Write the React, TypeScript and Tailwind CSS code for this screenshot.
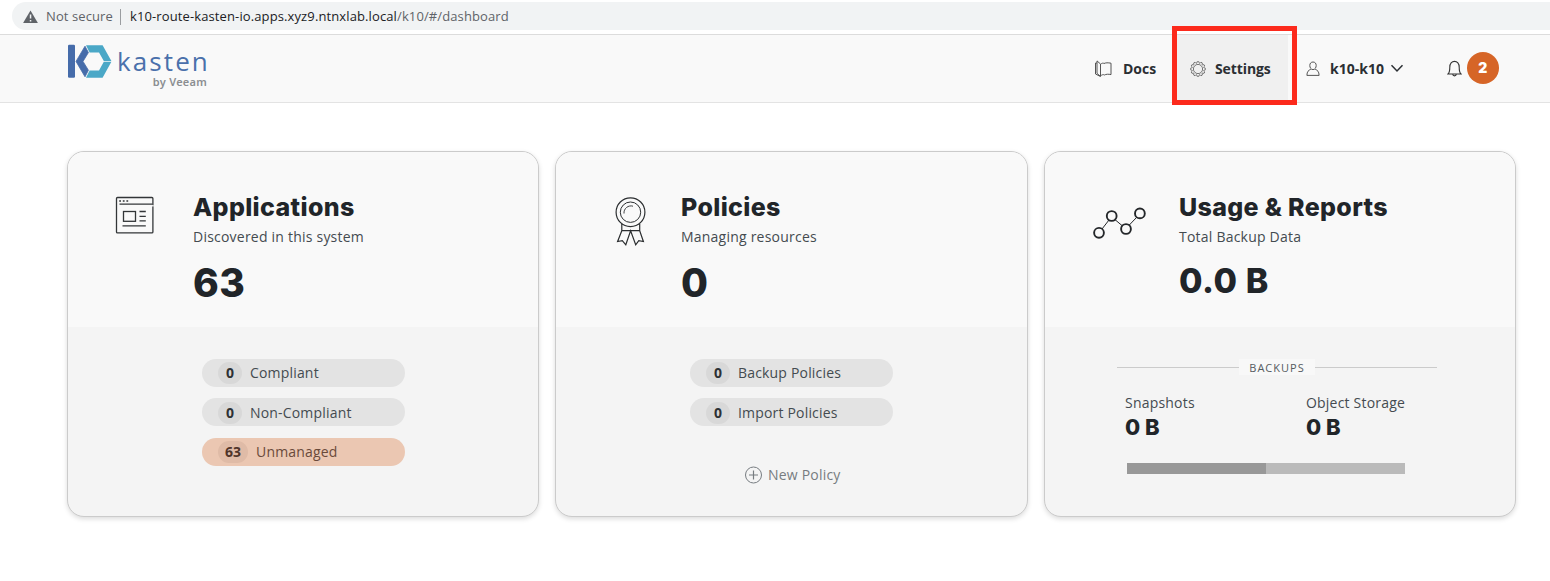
import type { ReactNode } from 'react';

function WarningIcon() {
  return (
    <svg width="16" height="14" viewBox="0 0 16 14" className="shrink-0">
      <path d="M7.5 0.4 14.9 13H0.1Z" fill="#5f6368" />
      <path d="M6.8 4.6h1.5v4H6.8zM6.8 9.9h1.5v1.5H6.8z" fill="#f1f3f4" />
    </svg>
  );
}

function KastenMark() {
  return (
    <svg width="44" height="35" viewBox="0 0 44 35" className="shrink-0">
      <rect x="0" y="0.8" width="7" height="33" rx="1.2" fill="#466caa" />
      <path d="M17 2.2 20.4 8.6 15 17.4 20.4 26.2 17 32.8 8 17.4Z" fill="#466caa" stroke="#466caa" strokeWidth="0.8" strokeLinejoin="round" />
      <path d="M18 1.2H34.6L43.4 17H35.8L31 8.4H21.6Z" fill="#4ba8c7" />
      <path d="M18 33.8H34.6L43.4 17.7H35.8L31 26.4H21.6Z" fill="#4ba8c7" />
    </svg>
  );
}

function DocsIcon() {
  return (
    <svg width="18" height="18" viewBox="0 0 18 18" fill="none" stroke="#555" strokeWidth="1" className="shrink-0">
      <path d="M6.5 4 3 0.9V13.4L6.5 16.4ZM6.500 4.300C8 3 9.200 2.900 10 3.500C11.500 2.700 14 2.600 17 3.200V14.600C14.500 14 12 14.100 10.500 15C9.500 14.300 8 14.600 6.500 16" />
      <path d="M3 3H1.500V14L6.200 16.400" />
    </svg>
  );
}

function GearIcon() {
  const teeth = Array.from({ length: 12 }, (_, i) => i * 30);
  return (
    <svg width="16" height="16" viewBox="0 0 16 16" fill="none" stroke="#666" className="shrink-0">
      <circle cx="8" cy="8" r="4.6" strokeWidth="0.9" />
      {teeth.map((a) => (
        <path key={a} d="M6.3 2.2 6.9 1.9 7.2 0.6H8.8L9.1 1.9 9.7 2.2" strokeWidth="0.8" transform={`rotate(${a} 8 8)`} />
      ))}
    </svg>
  );
}

function UserIcon() {
  return (
    <svg width="14" height="16" viewBox="0 0 14 16" fill="none" stroke="#444" strokeWidth="0.9" className="shrink-0">
      <path d="M7 1C9 1 10.2 2.4 10.2 4.5S9 8.6 7 8.6 3.8 6.6 3.8 4.5 5 1 7 1ZM4.8 8.3C2.5 9.2 1 10.5 0.9 14.4H13.1C13 10.5 11.5 9.2 9.2 8.3" />
    </svg>
  );
}

function BellIcon() {
  return (
    <svg width="15" height="18" viewBox="0 0 15 18" fill="none" stroke="#333" strokeWidth="1.1" className="shrink-0">
      <path d="M1 14H14C12.4 12.4 12.2 10.8 12.2 7.2 12.2 3.6 10.2 1.4 7.5 1.4S2.8 3.6 2.8 7.2C2.8 10.8 2.6 12.4 1 14ZM5.7 14.2C5.9 16.4 9.1 16.4 9.3 14.2" />
    </svg>
  );
}

function AppsIcon() {
  return (
    <svg width="125" height="60" viewBox="68 192 125 60" fill="none" stroke="#333638" strokeWidth="1.3" className="shrink-0">
      <rect x="116.5" y="197.5" width="36.4" height="35.4" rx="1" />
      <path d="M119.5 204.2H152.5" />
      <path d="M152.9 205V206.6" stroke="#f9f9f9" strokeWidth="1.5" />
      <path d="M119.2 201H121M122.8 201H124.6M126.4 201H128.2" strokeWidth="1.6" />
      <rect x="123.5" y="211.5" width="12" height="9.8" />
      <path d="M139.5 211.5H145.8M139.5 216.3H145.8M139.5 220.8H145.8M122.5 225.9H145.8" />
    </svg>
  );
}

function RibbonIcon() {
  return (
    <svg width="125" height="60" viewBox="556 192 125 60" fill="none" stroke="#2b2e30" strokeWidth="1.2" className="shrink-0">
      <circle cx="630.5" cy="212.2" r="14.4" />
      <circle cx="630.5" cy="212.2" r="10.2" strokeWidth="1" />
      <path d="M624 213.5A7 7 0 0 1 633 206.2" strokeWidth="0.9" />
      <path d="M621.8 223.7V230.7H639.7V223.7M621.8 230.7 617.6 241.5 622.3 240.6 625.8 244.8 630.6 230.7 635.7 244.8 638.8 240.6 643.4 241.5 639.7 230.7" />
    </svg>
  );
}

function GraphIcon() {
  return (
    <svg width="134" height="60" viewBox="1045 192 134 60" fill="none" stroke="#24272a" className="shrink-0">
      <path d="M1102 229 1109 220M1114.5 219.2 1122.5 226M1129.3 225 1137 217" strokeWidth="1" />
      <g strokeWidth="1.9">
        <circle cx="1099" cy="232.8" r="4.9" />
        <circle cx="1111.7" cy="216" r="4.9" />
        <circle cx="1126" cy="229" r="4.9" />
        <circle cx="1139.9" cy="213.4" r="4.9" />
      </g>
    </svg>
  );
}

function Card({ icon, title, subtitle, value, valueClass, children }: {
  icon: ReactNode; title: string; subtitle: string; value: string; valueClass: string; children: ReactNode;
}) {
  return (
    <section className="flex h-[366px] flex-col overflow-hidden rounded-[17px] border border-[#cbcbcb] bg-[#f4f4f4] shadow-[0_2px_5px_rgba(0,0,0,0.14)]">
      <div className="flex h-[175px] bg-[#f9f9f9] pt-10">
        {icon}
        <div className="whitespace-nowrap text-[#212529]">
          <h2 className="font-[Inter] text-[25px] leading-[31px] font-extrabold tracking-[0.35px]">{title}</h2>
          <p className="mt-1 text-sm leading-5 tracking-[0.22px] text-[#444b50]">{subtitle}</p>
          <p className={`font-[Inter] font-extrabold ${valueClass}`}>{value}</p>
        </div>
      </div>
      {children}
    </section>
  );
}

function Pill({ count, label, variant = 'first' }: { count: number; label: string; variant?: 'first' | 'second' | 'warn' }) {
  const warn = variant === 'warn';
  return (
    <div className={`flex h-7 w-[203px] items-center rounded-full pl-4 ${warn ? 'mt-px bg-[#ebc7b2] text-[#6a4a3a]' : 'bg-[#e3e3e3] text-[#444b50]'} ${variant === 'second' ? 'pt-px' : ''}`}>
      <span className={`flex h-[22px] items-center justify-center rounded-full text-sm font-bold ${warn ? 'w-[30px] bg-[#dfbba7] text-[#50352a]' : 'w-6 bg-[#d8d8d8] text-[#2d3134]'}`}>{count}</span>
      <span className="ml-2 text-sm tracking-[0.18px]">{label}</span>
    </div>
  );
}

function Stat({ label, value }: { label: string; value: string }) {
  return (
    <div>
      <p className="text-sm leading-5 tracking-[0.2px] text-[#444b50]">{label}</p>
      <p className="font-[Inter] text-[22px] leading-7 font-extrabold text-[#212529]">{value}</p>
    </div>
  );
}

export default function App() {
  return (
    <div className="h-[581px] w-[1550px] overflow-hidden bg-white font-['Open_Sans',sans-serif] whitespace-nowrap">
      <div className="h-[35px] border-b border-[#dcdcdc] pt-0.5 pl-3">
        <div className="flex h-7 items-center rounded-l-full bg-[#f1f3f4] pt-px pl-[11px] text-[13px]">
          <WarningIcon />
          <span className="ml-[7px] w-[67px] tracking-[0.1px] text-[#5f6368]">Not secure</span>
          <span className="mr-[9px] ml-[7px] h-4 w-px bg-[#9a9da0]" />
          <span className="tracking-[0.115px] text-[#202124]">k10-route-kasten-io.apps.xyz9.ntnxlab.local</span>
          <span className="tracking-[0.115px] text-[#5f6368]">/k10/#/dashboard</span>
        </div>
      </div>

      <header className="flex h-[68px] border-b border-[#e3e3e3] bg-[#f9f9f9] pl-[67px] text-sm font-bold text-[#2b2f33]">
        <div className="flex w-[1016px] pt-[9px] pl-px">
          <KastenMark />
          <div className="ml-[5px] w-[91px] pt-[3px]">
            <div className="text-[26px] leading-7 font-normal tracking-[2.1px] text-[#4a70ab]">kasten</div>
            <div className="mr-px mt-px text-right font-['Noto_Sans'] text-[11px] leading-3 font-semibold tracking-[0.25px] text-[#8b8e91]">by Veeam</div>
          </div>
        </div>
        <nav className="flex h-[67px] items-center">
          <a className="flex h-full w-[89px] items-center gap-[11px] pl-[11px]"><DocsIcon />Docs</a>
          <a className="relative flex h-full w-[116px] items-center gap-2 bg-[#f0f0f0] pl-[18px]">
            <GearIcon /><span className="pl-px tracking-[-0.1px]">Settings</span>
            <span className="absolute top-[-9px] left-0 h-[79px] w-[125px] border-[5px] border-[#fc2a1c]" />
          </a>
          <a className="flex items-center pl-[18px]">
            <UserIcon />
            <span className="ml-[10px]">k10-k10</span>
            <svg width="14" height="9" viewBox="0 0 14 9" fill="none" stroke="#2b2f33" strokeWidth="1.5" className="ml-1.5"><path d="M1.5 1.2 7 7 12.5 1.2" /></svg>
          </a>
          <a className="ml-[43px] flex items-center">
            <BellIcon />
            <span className="ml-[5px] -mt-0.5 flex size-8 items-center justify-center rounded-full bg-[#d66527] font-[Inter] text-sm font-black text-white">2</span>
          </a>
        </nav>
      </header>

      <main className="grid grid-cols-[472px_473px_472px] gap-4 pt-12 pl-[67px]">
        <Card icon={<AppsIcon />} title="Applications" subtitle="Discovered in this system" value="63" valueClass="mt-2.5 text-[39px] leading-[51px] tracking-[0.5px]">
          <div className="flex flex-col gap-[11px] pt-8 pl-[134px]">
            <Pill count={0} label="Compliant" />
            <Pill count={0} label="Non-Compliant" variant="second" />
            <Pill count={63} label="Unmanaged" variant="warn" />
          </div>
        </Card>
        <Card icon={<RibbonIcon />} title="Policies" subtitle="Managing resources" value="0" valueClass="mt-2.5 text-[39px] leading-[51px]">
          <div className="flex flex-col gap-[11px] pt-8 pl-[134px]">
            <Pill count={0} label="Backup Policies" />
            <Pill count={0} label="Import Policies" variant="second" />
          </div>
          <div className="mt-[39px] flex h-5 items-center pl-[188px] text-sm tracking-[0.2px] text-[#777c80]">
            <svg width="19" height="18" viewBox="0 0 19 18" fill="none" stroke="#777c80" className="mr-[5px]"><circle cx="9.5" cy="9" r="8" /><path d="M9.5 4.5V13.5M5 9H14" strokeWidth="1.2" /></svg>
            New Policy
          </div>
        </Card>
        <Card icon={<GraphIcon />} title="Usage & Reports" subtitle="Total Backup Data" value="0.0 B" valueClass="mt-2 text-[34px] leading-[51px] tracking-[0.6px]">
          <div className="flex w-[392px] items-center pt-8 pl-[72px]">
            <span className="h-px flex-1 bg-[#cbcbcb]" />
            <span className="h-4 w-[76px] bg-[#f8f8f8] text-center text-[11px] leading-[18px] tracking-[1px] text-[#555b60]">BACKUPS</span>
            <span className="h-px flex-1 bg-[#cbcbcb]" />
          </div>
          <div className="mt-[18px] grid w-[390px] grid-cols-[181px_auto] pl-20">
            <Stat label="Snapshots" value="0 B" />
            <Stat label="Object Storage" value="0 B" />
          </div>
          <div className="mt-[22px] ml-[82px] flex h-[11px] w-[278px]">
            <span className="w-1/2 bg-[#989898]" />
            <span className="w-1/2 bg-[#bababa]" />
          </div>
        </Card>
      </main>
    </div>
  );
}
